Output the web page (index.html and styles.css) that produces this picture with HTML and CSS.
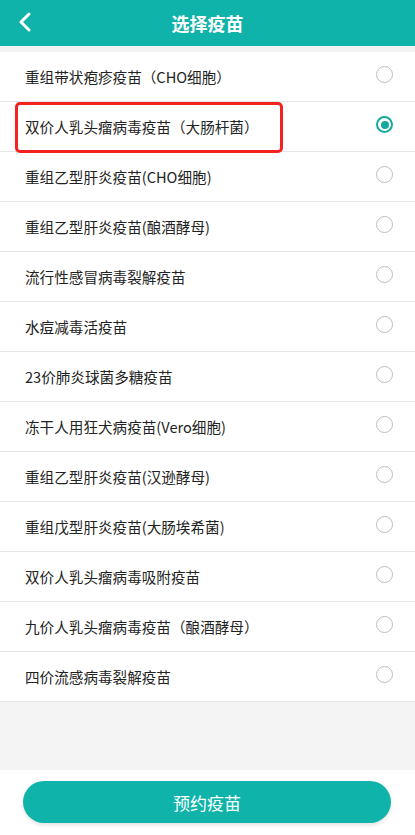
FILE: index.html
```html
<!DOCTYPE html>
<html>
<head>
  <meta charset="utf-8">
  <title>选择疫苗</title>
  <link rel="stylesheet" href="styles.css">
</head>
<body>
  <!-- Header -->
  <div class="header">
    <span class="back">
      <svg width="14" height="20" viewBox="0 0 14 20"><path d="M11 2 L3 10 L11 18" fill="none" stroke="#fff" stroke-width="3" stroke-linecap="round" stroke-linejoin="round"/></svg>
    </span>
    <h1>选择疫苗</h1>
  </div>

  <!-- Vaccine list -->
  <div class="content">
    <ul class="vaccine-list">
      <li><span>重组带状疱疹疫苗（CHO细胞）</span><i class="radio"></i></li>
      <li class="marked"><span>双价人乳头瘤病毒疫苗（大肠杆菌）</span><i class="radio checked"></i></li>
      <li><span>重组乙型肝炎疫苗(CHO细胞)</span><i class="radio"></i></li>
      <li><span>重组乙型肝炎疫苗(酿酒酵母)</span><i class="radio"></i></li>
      <li><span>流行性感冒病毒裂解疫苗</span><i class="radio"></i></li>
      <li><span>水痘减毒活疫苗</span><i class="radio"></i></li>
      <li><span>23价肺炎球菌多糖疫苗</span><i class="radio"></i></li>
      <li><span>冻干人用狂犬病疫苗(Vero细胞)</span><i class="radio"></i></li>
      <li><span>重组乙型肝炎疫苗(汉逊酵母)</span><i class="radio"></i></li>
      <li><span>重组戊型肝炎疫苗(大肠埃希菌)</span><i class="radio"></i></li>
      <li><span>双价人乳头瘤病毒吸附疫苗</span><i class="radio"></i></li>
      <li><span>九价人乳头瘤病毒疫苗（酿酒酵母）</span><i class="radio"></i></li>
      <li><span>四价流感病毒裂解疫苗</span><i class="radio"></i></li>
    </ul>
  </div>

  <!-- Footer -->
  <div class="footer">
    <button type="button">预约疫苗</button>
  </div>
</body>
</html>
```

FILE: styles.css
```css
/* Page */
body {
  margin: 0;
  font-family: "Noto Sans CJK SC", "Noto Sans", sans-serif;
  background-color: #f4f4f5;
  height: 835px;
  display: flex;
  flex-direction: column;
}

/* Header bar */
.header {
  height: 46px;
  background-color: #0fb3aa;
  display: flex;
  align-items: center;
  justify-content: center;
  position: relative;
}

.header .back {
  position: absolute;
  left: 18px;
  top: 12px;
}

.header h1 {
  margin: 0;
  color: #fff;
  font-size: 18px;
  font-weight: bold;
}

/* List */
.content {
  flex: 1;
  padding-top: 6px;
}

.vaccine-list {
  list-style: none;
  margin: 0;
  padding: 0;
  background-color: #fff;
}

.vaccine-list li {
  height: 49px;
  border-bottom: 1px solid #e6e6e6;
  display: flex;
  align-items: center;
  justify-content: space-between;
  padding: 0 22px 0 25px;
  font-size: 14.6px;
  color: #222;
  position: relative;
}

.radio {
  width: 17px;
  height: 17px;
  border: 1px solid #bdbdbd;
  border-radius: 50%;
  margin-top: -4px;
  box-sizing: border-box;
}

.radio.checked {
  border: 2px solid #14a99f;
  display: flex;
  align-items: center;
  justify-content: center;
}

.radio.checked::after {
  content: "";
  width: 8px;
  height: 8px;
  border-radius: 50%;
  background-color: #14a99f;
}

/* Red annotation box */
.marked::before {
  content: "";
  position: absolute;
  left: 15px;
  top: 0;
  width: 268px;
  height: 51px;
  border: 3px solid #f5231f;
  border-radius: 5px;
  box-sizing: border-box;
}

/* Footer */
.footer {
  height: 65px;
  background-color: #fff;
  padding: 11px 24px 0 23px;
  box-sizing: border-box;
}

.footer button {
  width: 100%;
  height: 42px;
  border: none;
  border-radius: 21px;
  background-color: #0fb3aa;
  color: #fff;
  font-family: inherit;
  font-size: 17px;
  box-shadow: 0 2px 4px rgba(0, 0, 0, 0.12);
}
```
